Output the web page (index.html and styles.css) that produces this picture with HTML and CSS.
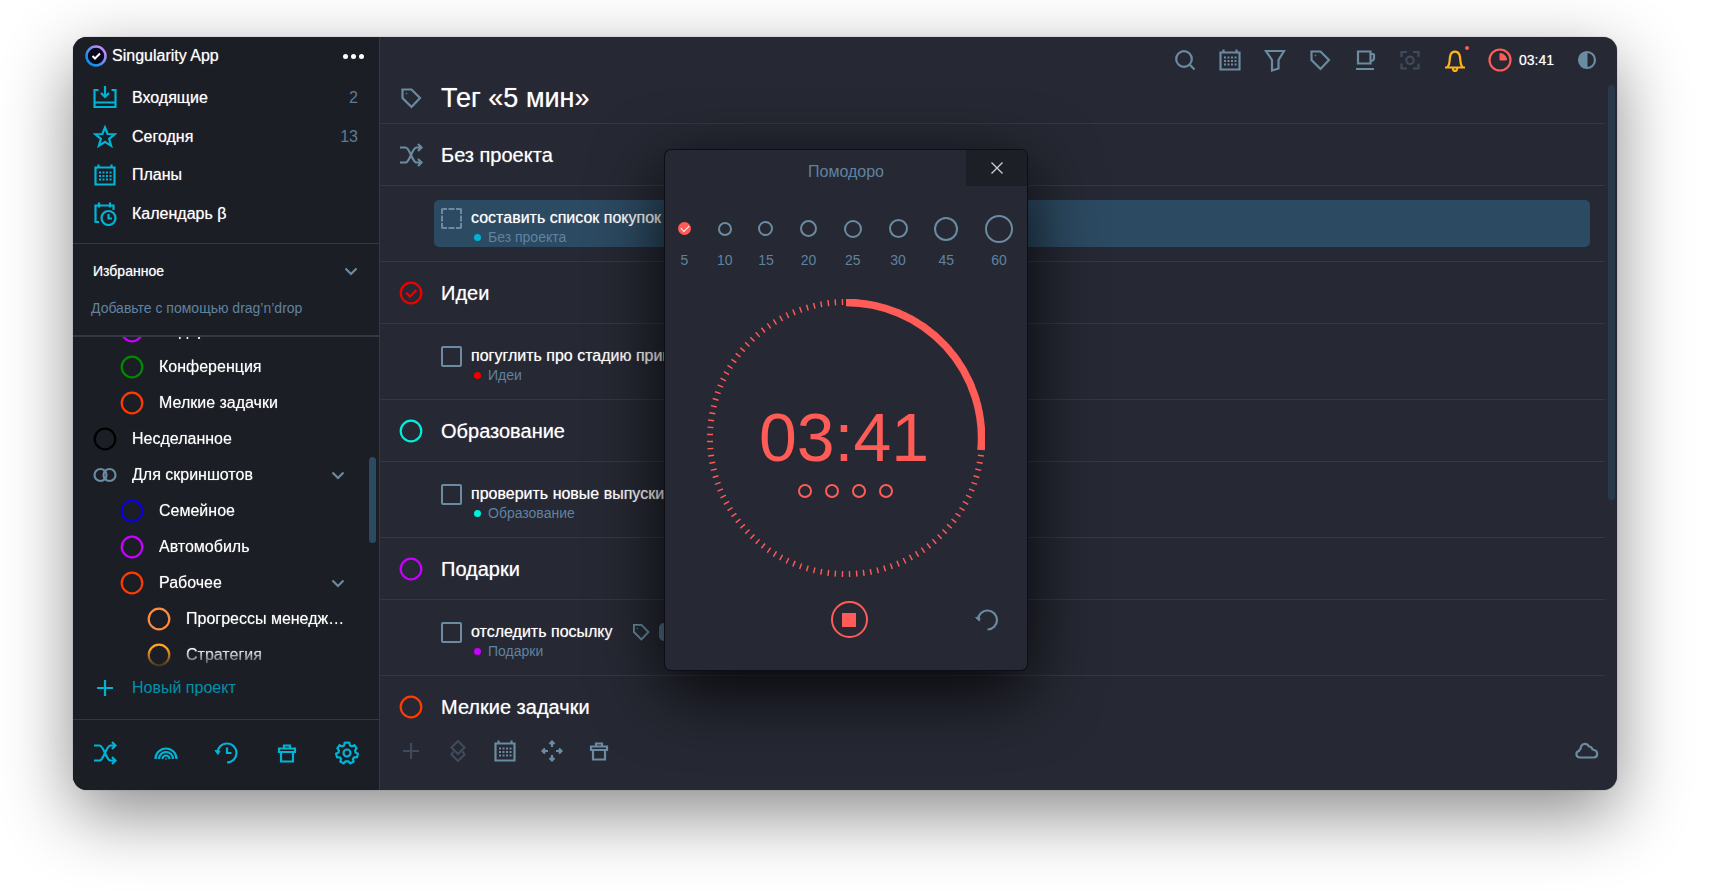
FILE: index.html
```html
<!DOCTYPE html>
<html lang="ru">
<head>
<meta charset="utf-8">
<title>Singularity App</title>
<link rel="stylesheet" href="styles.css">
</head>
<body>
<svg class="sprite" aria-hidden="true">
  <symbol id="i-inbox" viewBox="0 0 24 24"><path d="M5.500 4H1.500v17h21V4h-4M1.500 16.500h21M12 0v11M8 7l4 4 4-4"/></symbol>
  <symbol id="i-star" viewBox="0 0 24 24"><path d="M12 2.500l2.600 6.500 7.200.2-5.700 4.600 2 7L12 16.800l-6.100 4 2-7L2.200 9.200l7.200-.2z"/></symbol>
  <symbol id="i-cal" viewBox="0 0 24 24"><path d="M2.500 4.500h19v17h-19zM5.500 1.500v3M18.500 1.500v3"/><path d="M6 9.500h2m1.500 0h2m1.500 0h2m1.500 0h2M6 13h2m1.500 0h2m1.500 0h2m1.500 0h2M6 16.500h2m1.500 0h2m1.500 0h2m1.500 0h2"/></symbol>
  <symbol id="i-calclock" viewBox="0 0 24 24"><path d="M6 20H2.500V3.500h18V8M6 .5v5M17 .5v5"/><circle cx="15.500" cy="16" r="7"/><path d="M15.500 12v4.500H19"/></symbol>
  <symbol id="i-chev" viewBox="0 0 24 24"><path d="M6.500 9.500l5.500 5.500 5.500-5.500"/></symbol>
  <symbol id="i-shuffle" viewBox="0 0 24 24"><path d="M1 4.500h5.500c4.500 0 6.500 15 11 15H22M1 19.500h5.500c4.500 0 6.500-15 11-15H22M19 1l3.500 3.500L19 8M19 16l3.500 3.500L19 23"/></symbol>
  <symbol id="i-rainbow" viewBox="0 0 24 24"><path d="M1.500 18a10.500 10.500 0 0 1 21 0M5 18a7 7 0 0 1 14 0M8.500 18a3.500 3.500 0 0 1 7 0M11.500 18h1"/></symbol>
  <symbol id="i-history" viewBox="0 0 24 24"><path d="M3.500 12A9.500 9.500 0 1 1 13 21.500M13 6.500V12h4.500"/><path class="solid" d="M1 9.500l5 .5-2 3.500z"/></symbol>
  <symbol id="i-trash" viewBox="0 0 24 24"><path d="M4 7.500h16v3.500H4zM6 11v9.500h12V11M9 7.500v-3h6v3"/></symbol>
  <symbol id="i-gear" viewBox="0 0 24 24"><path d="M12 1.500l2.300.3.700 2.700 1.900.9 2.500-1.200 2.200 3-1.500 2.300.4 2 2.400 1.200-.9 3.600-2.800.1-1.300 1.700.7 2.600-3.300 1.600-1.900-2h-2.800l-1.900 2-3.300-1.600.7-2.600-1.300-1.700-2.800-.1L1.100 12.700l2.400-1.200.4-2L2.400 7.200l2.200-3 2.500 1.200 1.900-.9.700-2.700z"/><circle cx="12" cy="12" r="3.500"/></symbol>
  <symbol id="i-plus" viewBox="0 0 24 24"><path d="M12 4v16M4 12h16"/></symbol>
  <symbol id="i-link" viewBox="0 0 24 24"><circle cx="7.500" cy="12" r="6"/><circle cx="16.500" cy="12" r="6"/></symbol>
  <symbol id="i-tag" viewBox="0 0 24 24"><path d="M3.500 3.500h9l8.500 8.500-8.500 9-9-9z"/><circle class="solid" cx="7.500" cy="7.500" r=".4"/></symbol>
  <symbol id="i-search" viewBox="0 0 24 24"><circle cx="11" cy="11" r="7.800"/><path d="M16.800 16.800l4.700 4.700"/></symbol>
  <symbol id="i-funnel" viewBox="0 0 24 24"><path d="M3 3h18l-5.500 9v8.500L9 22.500V12z"/></symbol>
  <symbol id="i-cup" viewBox="0 0 24 24"><path d="M5 3.500h12.500v12H5zM17.500 6H20a1 1 0 0 1 1 1v3c0 2-1.500 3-3.500 3M3 21h18"/></symbol>
  <symbol id="i-focus" viewBox="0 0 24 24"><path d="M3.500 9V4H9M15 4h5.500v5M20.500 15.500v5H15M9 20.500H3.500v-5"/><circle cx="12" cy="12.300" r="3.700"/></symbol>
  <symbol id="i-bell" viewBox="0 0 24 24"><path d="M2 19.500h20M4.500 19C7.500 16 6 11 7.500 7c1.500-4.500 7.500-4.500 9 0 1.500 4 0 9 3 12M10 20v1a2 2 0 0 0 4 0v-1"/></symbol>
  <symbol id="i-pie" viewBox="0 0 24 24"><circle cx="12" cy="12" r="10.500"/><path class="solid" d="M12 5.500a6.500 6.500 0 0 1 6.500 6.500H12z"/></symbol>
  <symbol id="i-half" viewBox="0 0 24 24"><circle cx="12" cy="12" r="8"/><path class="solid" d="M12 4a8 8 0 0 0 0 16z"/></symbol>
  <symbol id="i-layers" viewBox="0 0 24 24"><path d="M12 2l6.500 6.500L12 15 5.500 8.500zM7.500 12.500l-2 3L12 22l6.500-6.500-2-3"/></symbol>
  <symbol id="i-move" viewBox="0 0 24 24"><path d="M12 2v6M12 16v6M2 12h6M16 12h6M9.500 5L12 2.500 14.500 5M9.500 19l2.500 2.500 2.500-2.500M5 9.500L2.500 12 5 14.500M19 9.500l2.500 2.500-2.500 2.500"/></symbol>
  <symbol id="i-cloud" viewBox="0 0 24 24"><path d="M4.500 18.500c-4-.5-4-6-.5-6.500 0-1 .5-1.500 1.500-2C6 3.500 12 4 14 7.500c1.500 0 3 1 3.500 3l1.500.500c4 .5 4.500 7 0 7.500z"/></symbol>
  <symbol id="i-check" viewBox="0 0 24 24"><circle cx="12" cy="12" r="10.300"/><path d="M7 11.500l4 4 6.500-6.500"/></symbol>
  <symbol id="i-ring" viewBox="0 0 24 24"><circle cx="12" cy="12" r="10.300"/></symbol>
  <symbol id="i-close" viewBox="0 0 24 24"><path d="M6.500 6.500l11 11M17.500 6.500l-11 11"/></symbol>
  <symbol id="i-reset" viewBox="0 0 24 24"><path d="M3 11.500A9.500 9.500 0 1 1 12.500 21.500"/><path class="solid" d="M.5 9.500l4.500.5-.5 3z"/></symbol>
</svg>

<div class="window">
  <aside class="sidebar">
    <header class="brand">
      <svg class="logo" viewBox="0 0 24 24" aria-hidden="true">
        <defs><linearGradient id="lg" x1="0" y1="1" x2="1" y2="0"><stop offset=".2" stop-color="#0a94ee"/><stop offset=".8" stop-color="#b98cf5"/></linearGradient></defs>
        <circle cx="12" cy="12" r="9.500" fill="#0a0a1c" stroke="url(#lg)" stroke-width="2.500"/>
        <path d="M8.500 12l2.500 2.500 5-5" fill="none" stroke="#fff" stroke-width="2"/>
      </svg>
      <span class="brand-name">Singularity App</span>
      <button class="more" aria-label="Меню"><i></i><i></i><i></i></button>
    </header>
    <nav class="nav">
      <a href="#"><svg class="icon"><use href="#i-inbox"/></svg><span>Входящие</span><b>2</b></a>
      <a href="#"><svg class="icon"><use href="#i-star"/></svg><span>Сегодня</span><b>13</b></a>
      <a href="#"><svg class="icon"><use href="#i-cal"/></svg><span>Планы</span></a>
      <a href="#"><svg class="icon"><use href="#i-calclock"/></svg><span>Календарь β</span></a>
    </nav>
    <section class="fav">
      <button class="fav-head"><span>Избранное</span><svg class="icon"><use href="#i-chev"/></svg></button>
      <p class="hint">Добавьте с помощью drag’n’drop</p>
    </section>
    <div class="projects">
      <nav class="tree">
        <a class="l2" href="#"><svg class="icon violet"><use href="#i-ring"/></svg><span>Подарки</span></a>
        <a class="l2" href="#"><svg class="icon green"><use href="#i-ring"/></svg><span>Конференция</span></a>
        <a class="l2" href="#"><svg class="icon orange"><use href="#i-ring"/></svg><span>Мелкие задачки</span></a>
        <a href="#"><svg class="icon black"><use href="#i-ring"/></svg><span>Несделанное</span></a>
        <a href="#"><svg class="icon slate"><use href="#i-link"/></svg><span>Для скриншотов</span><svg class="icon chev"><use href="#i-chev"/></svg></a>
        <a class="l2" href="#"><svg class="icon blue"><use href="#i-ring"/></svg><span>Семейное</span></a>
        <a class="l2" href="#"><svg class="icon violet"><use href="#i-ring"/></svg><span>Автомобиль</span></a>
        <a class="l2" href="#"><svg class="icon orange"><use href="#i-ring"/></svg><span>Рабочее</span><svg class="icon chev"><use href="#i-chev"/></svg></a>
        <a class="l3" href="#"><svg class="icon peach"><use href="#i-ring"/></svg><span>Прогрессы менеджеров</span></a>
        <a class="l3" href="#"><svg class="icon amber"><use href="#i-ring"/></svg><span>Стратегия</span></a>
      </nav>
      <div class="scroll scroll-side"></div>
    </div>
    <button class="new-project"><svg class="icon"><use href="#i-plus"/></svg><span>Новый проект</span></button>
    <footer class="side-foot">
      <button aria-label="Без проекта"><svg class="icon"><use href="#i-shuffle"/></svg></button>
      <button aria-label="Когда-нибудь"><svg class="icon"><use href="#i-rainbow"/></svg></button>
      <button aria-label="Дневник"><svg class="icon"><use href="#i-history"/></svg></button>
      <button aria-label="Корзина"><svg class="icon"><use href="#i-trash"/></svg></button>
      <button aria-label="Настройки"><svg class="icon"><use href="#i-gear"/></svg></button>
    </footer>
  </aside>

  <main class="main">
    <div class="toolbar">
      <button aria-label="Поиск"><svg class="icon"><use href="#i-search"/></svg></button>
      <button aria-label="Календарь"><svg class="icon"><use href="#i-cal"/></svg></button>
      <button aria-label="Фильтр"><svg class="icon"><use href="#i-funnel"/></svg></button>
      <button aria-label="Теги"><svg class="icon"><use href="#i-tag"/></svg></button>
      <button aria-label="Перерыв"><svg class="icon"><use href="#i-cup"/></svg></button>
      <button class="dim" aria-label="Фокус"><svg class="icon"><use href="#i-focus"/></svg></button>
      <button class="bell" aria-label="Уведомления"><svg class="icon"><use href="#i-bell"/></svg></button>
      <button class="timer"><svg class="icon"><use href="#i-pie"/></svg><span>03:41</span></button>
      <button aria-label="Тема"><svg class="icon"><use href="#i-half"/></svg></button>
    </div>
    <div class="body">
      <div class="content">
        <header class="title"><svg class="icon slate"><use href="#i-tag"/></svg><h1>Тег «5 мин»</h1></header>
        <div class="groups">
          <h2><svg class="icon slate"><use href="#i-shuffle"/></svg>Без проекта</h2>
          <div class="task selected">
            <input type="checkbox" id="t1"><label for="t1">составить список покупок</label>
            <span class="sub"><i class="c-cyan"></i>Без проекта</span>
          </div>
          <h2><svg class="icon red"><use href="#i-check"/></svg>Идеи</h2>
          <div class="task">
            <input type="checkbox" id="t2"><label for="t2">погуглить про стадию принятия</label>
            <span class="sub"><i class="c-red"></i>Идеи</span>
          </div>
          <h2><svg class="icon aqua"><use href="#i-ring"/></svg>Образование</h2>
          <div class="task">
            <input type="checkbox" id="t3"><label for="t3">проверить новые выпуски</label>
            <span class="sub"><i class="c-aqua"></i>Образование</span>
          </div>
          <h2><svg class="icon violet"><use href="#i-ring"/></svg>Подарки</h2>
          <div class="task">
            <input type="checkbox" id="t4"><label for="t4">отследить посылку</label>
            <span class="tags"><svg class="icon"><use href="#i-tag"/></svg><em>5 мин</em></span>
            <span class="sub"><i class="c-violet"></i>Подарки</span>
          </div>
          <h2><svg class="icon orange"><use href="#i-ring"/></svg>Мелкие задачки</h2>
        </div>
      </div>
      <div class="scroll scroll-main"></div>
    </div>
    <footer class="main-foot">
      <button class="dim" aria-label="Добавить"><svg class="icon"><use href="#i-plus"/></svg></button>
      <button class="dim" aria-label="Приоритет"><svg class="icon"><use href="#i-layers"/></svg></button>
      <button aria-label="Дата"><svg class="icon"><use href="#i-cal"/></svg></button>
      <button aria-label="Переместить"><svg class="icon"><use href="#i-move"/></svg></button>
      <button aria-label="Удалить"><svg class="icon"><use href="#i-trash"/></svg></button>
      <button class="cloud" aria-label="Синхронизация"><svg class="icon"><use href="#i-cloud"/></svg></button>
    </footer>
  </main>

  <section class="modal" role="dialog" aria-labelledby="pomo">
    <header class="modal-head"><h3 id="pomo">Помодоро</h3><button class="close" aria-label="Закрыть"><svg class="icon"><use href="#i-close"/></svg></button></header>
    <div class="durations">
      <div class="dur s1"><span><input type="radio" name="d" id="d5" checked></span><label for="d5">5</label></div>
      <div class="dur s2"><span><input type="radio" name="d" id="d10"></span><label for="d10">10</label></div>
      <div class="dur s3"><span><input type="radio" name="d" id="d15"></span><label for="d15">15</label></div>
      <div class="dur s4"><span><input type="radio" name="d" id="d20"></span><label for="d20">20</label></div>
      <div class="dur s5"><span><input type="radio" name="d" id="d25"></span><label for="d25">25</label></div>
      <div class="dur s6"><span><input type="radio" name="d" id="d30"></span><label for="d30">30</label></div>
      <div class="dur s7"><span><input type="radio" name="d" id="d45"></span><label for="d45">45</label></div>
      <div class="dur s8"><span><input type="radio" name="d" id="d60"></span><label for="d60">60</label></div>
    </div>
    <div class="dial">
      <svg class="dial-ring" viewBox="0 0 278 278" aria-hidden="true">
        <circle cx="139" cy="139" r="136" pathLength="1200" stroke-width="6" stroke-dasharray="2 8" stroke-dashoffset="-4"/>
        <path d="M139 3.500A135.500 135.500 0 0 1 274 151" stroke-width="7.500"/>
      </svg>
      <div class="dial-text">
        <time>03:41</time>
        <div class="rounds"><i></i><i></i><i></i><i></i></div>
      </div>
    </div>
    <div class="controls">
      <button class="stop" aria-label="Стоп"><i></i></button>
      <button class="reset" aria-label="Сбросить"><svg class="icon"><use href="#i-reset"/></svg></button>
    </div>
  </section>
</div>
</body>
</html>
```
FILE: styles.css
```css
* { box-sizing: border-box; }

body {
  display: flex;
  height: 100vh;
  margin: 0;
  padding: 37px 97px 102px 73px;
  overflow: hidden;
  background: #fff;
  color: #fff;
  font: 16px/20px "Liberation Sans", Arial, sans-serif;
}

button {
  display: flex;
  align-items: center;
  padding: 0;
  border: 0;
  background: none;
  color: inherit;
  font: inherit;
}

a { color: inherit; text-decoration: none; }
h1, h2, h3, p { margin: 0; font-weight: 400; }

/* Slightly heavier white captions */
.brand-name, .nav span, .fav-head, .tree, .timer span, .title, .groups h2, .task label {
  text-shadow: 0 0 1px rgba(255, 255, 255, .6);
}

.sprite { position: absolute; width: 0; height: 0; }

.icon {
  flex: none;
  width: 24px;
  height: 24px;
  fill: none;
  stroke: currentColor;
  stroke-width: 2.2;
}
.solid { fill: currentColor; stroke-width: 1; }

.violet { color: #c800ff; }
.green { color: #008a00; }
.orange { color: #ff3c00; }
.black { color: #000; }
.slate { color: #6a8ba1; }
.blue { color: #0a00e0; }
.peach { color: #ff8c3c; }
.amber { color: #ffa51e; }
.red { color: #f00000; }
.aqua { color: #00f0dc; }

.window {
  position: relative;
  display: flex;
  flex: 1;
  min-width: 0;
  border-radius: 14px;
  background: #262833;
  box-shadow: 0 0 1px rgba(0, 0, 0, .6), 0 24px 70px rgba(0, 0, 0, .46);
}

/* Sidebar */
.sidebar {
  display: flex;
  flex: none;
  flex-direction: column;
  width: 307px;
  border-right: 1px solid #353744;
  border-radius: 14px 0 0 14px;
  background: #1c1e26;
}

.brand {
  display: flex;
  flex: none;
  align-items: center;
  height: 38px;
  padding: 0 15px 0 11px;
}
.logo { width: 24px; height: 24px; }
.brand-name { flex: 1; padding-left: 4px; }
.more { gap: 3px; }
.more i { width: 5px; height: 5px; border-radius: 50%; background: #fff; }

.nav {
  display: grid;
  flex: none;
  grid-template-rows: repeat(4, 1fr);
  height: 169px;
  padding: 4px 21px 10px 20px;
  border-bottom: 1px solid #353744;
}
.nav a { display: flex; align-items: center; gap: 15px; }
.nav span { flex: 1; }
.nav b { color: #5c7c94; font-weight: 400; }
.nav .icon { color: #00b4d5; }

.fav {
  flex: none;
  padding: 9px 16px 8px 18px;
  border-bottom: 2px solid #353744;
  font-size: 14px;
}
.fav-head { justify-content: space-between; width: 100%; height: 36px; padding-left: 2px; }
.fav-head .icon { color: #6a8ba1; }
.hint { color: #5f83a0; line-height: 38px; }

.projects {
  display: flex;
  flex: 1;
  min-height: 0;
  padding-right: 3px;
  overflow: hidden;
}
.tree {
  flex: 1;
  min-width: 0;
  margin-top: -24px;
  overflow: hidden;
  mask-image: linear-gradient(to top, transparent, #000 20px);
}
.tree a {
  display: flex;
  align-items: center;
  gap: 15px;
  height: 36px;
  padding: 0 19px 0 20px;
}
.tree .l2 { padding-left: 47px; }
.tree .l3 { padding-left: 74px; padding-right: 22px; }
.tree span { flex: 1; overflow: hidden; text-overflow: ellipsis; white-space: nowrap; }
.tree .chev { color: #6a8ba1; }

.scroll { flex: none; width: 7px; border-radius: 4px; background: #2c4a62; }
.scroll-side { height: 86px; margin-top: 120px; }

.new-project {
  flex: none;
  gap: 15px;
  height: 50px;
  padding: 0 20px 13px;
  color: #0092ac;
}
.new-project .icon { color: #00b4d5; }

.side-foot {
  display: flex;
  flex: none;
  justify-content: space-between;
  height: 71px;
  padding: 0 20px 4px;
  border-top: 1px solid #353744;
  color: #00b4d5;
}

/* Main area */
.main { display: flex; flex: 1; flex-direction: column; min-width: 0; }

.toolbar {
  display: flex;
  flex: none;
  justify-content: flex-end;
  gap: 21px;
  height: 46px;
  padding-right: 18px;
  color: #6a8ba1;
}
.dim { color: #3f4b5b; }
.bell { position: relative; color: #ffb31a; }
.bell::after {
  position: absolute;
  top: 9px;
  right: -2px;
  width: 4px;
  height: 4px;
  border-radius: 50%;
  background: #ff5c57;
  content: "";
}
.timer { gap: 7px; color: #ff5c57; }
.timer span { color: #fff; font-size: 14px; }

.body { display: flex; flex: 1; min-height: 0; }
.content {
  display: flex;
  flex: 1;
  flex-direction: column;
  min-width: 0;
  margin-right: 3px;
  overflow: hidden;
}
.title, .groups h2 { display: flex; flex: none; align-items: center; gap: 18px; padding-left: 19px; }
.title {
  height: 41px;
  padding-bottom: 10px;
  border-bottom: 1px solid #353744;
}
.title h1 { font-size: 27px; line-height: 30px; }
.groups h2 { height: 62px; border-bottom: 1px solid #353744; font-size: 20px; }
.groups h2:last-child { border: 0; }

.task {
  display: grid;
  grid-template-columns: 21px auto 1fr;
  grid-template-rows: 20px 18px;
  align-items: center;
  column-gap: 9px;
  padding: 22px 15px 15px 61px;
  border-bottom: 1px solid #353744;
}
.task.selected {
  position: relative;
  z-index: 0;
}
.task.selected::before {
  position: absolute;
  z-index: -1;
  inset: 14px 15px 14px 54px;
  border-radius: 5px;
  background: #2c4a62;
  content: "";
}
.task input {
  align-self: start;
  width: 21px;
  height: 21px;
  margin: 0;
  border: 2px solid #6a8ba1;
  border-radius: 2px;
  appearance: none;
}
.task.selected input { border-style: dashed; }
.task label { white-space: nowrap; }
.sub {
  display: flex;
  grid-row: 2;
  grid-column: 2 / -1;
  align-items: center;
  gap: 7px;
  padding-left: 3px;
  color: #5f83a0;
  font-size: 14px;
}
.sub i { width: 7px; height: 7px; border-radius: 50%; }
.c-cyan { background: #00b4d5; }
.c-red { background: #f00000; }
.c-aqua { background: #00f0dc; }
.c-violet { background: #c800ff; }
.tags { display: flex; align-items: center; gap: 8px; padding-left: 9px; color: #6a8ba1; }
.tags .icon { width: 20px; height: 20px; }
.tags em {
  padding: 0 8px;
  border-radius: 5px;
  background: #56728a;
  color: #fff;
  font-size: 13px;
  font-style: normal;
  line-height: 18px;
}

.scroll-main { height: 415px; margin: 2px 2px 0 0; background: #29384b; }

.main-foot {
  display: flex;
  flex: none;
  gap: 23px;
  height: 60px;
  padding: 0 18px 18px 19px;
  color: #6a8ba1;
}
.cloud { margin-left: auto; }

/* Pomodoro window */
.modal {
  position: absolute;
  top: 113px;
  left: 50%;
  width: 362px;
  margin-left: -180px;
  padding-bottom: 32px;
  border-radius: 6px;
  background: #262833;
  box-shadow: 0 0 0 1px #0d0d14, 0 20px 70px rgba(0, 0, 0, .85);
}
.modal-head { display: grid; grid-template-columns: 1fr auto 1fr; height: 44px; }
.modal-head h3 { grid-column: 2; align-self: center; color: #5f83a0; font-size: 16px; }
.close {
  justify-content: center;
  justify-self: end;
  width: 61px;
  height: 36px;
  border-radius: 0 6px 0 0;
  background: #1d1f27;
  color: #d0d0d4;
}
.close .icon { stroke-width: 1.3; }

.durations { display: flex; justify-content: space-between; padding: 20px 14px 0 13px; }
.dur { display: flex; flex-direction: column; align-items: center; }
.dur span { display: flex; align-items: center; width: 100%; height: 29px; }
.dur input {
  width: 100%;
  margin: 0;
  border: 2px solid #6a8ba1;
  border-radius: 50%;
  aspect-ratio: 1;
  appearance: none;
}
.dur input:checked { display: grid; place-items: center; border: 0; background: #ff5c57; }
.dur input:checked::before {
  width: 7px;
  height: 4px;
  margin-bottom: 2px;
  border-bottom: 1px solid #fff;
  border-left: 1px solid #fff;
  transform: rotate(-45deg);
  content: "";
}
.dur label { margin-top: 8px; color: #5f83a0; font-size: 14px; line-height: 18px; }
.s1 { width: 13px; }
.s2 { width: 14px; }
.s3 { width: 15px; }
.s4 { width: 17px; }
.s5 { width: 18px; }
.s6 { width: 19px; }
.s7 { width: 24px; }
.s8 { width: 28px; }

.dial { display: grid; justify-content: center; margin-top: 30px; }
.dial-ring, .dial-text { grid-area: 1 / 1; }
.dial-ring { width: 278px; height: 278px; fill: none; stroke: #ff5c57; }
.dial-text {
  display: flex;
  flex-direction: column;
  align-items: center;
  justify-content: center;
  gap: 9px;
  padding: 21px 4px 0 0;
  color: #ff5c57;
}
.dial-text time { font-size: 68px; line-height: 76px; }
.rounds { display: flex; gap: 13px; padding-left: 3px; }
.rounds i { width: 14px; height: 14px; border: 2px solid #ff5c57; border-radius: 50%; }

.controls {
  display: grid;
  grid-template-columns: 1fr auto 1fr;
  align-items: center;
  margin-top: 24px;
  padding: 0 28px 0 34px;
}
.stop {
  grid-column: 2;
  justify-content: center;
  width: 37px;
  height: 37px;
  border: 2px solid #ff5c57;
  border-radius: 50%;
}
.stop i { width: 14px; height: 14px; background: #ff5c57; }
.reset { justify-self: end; color: #6a8ba1; }
```
